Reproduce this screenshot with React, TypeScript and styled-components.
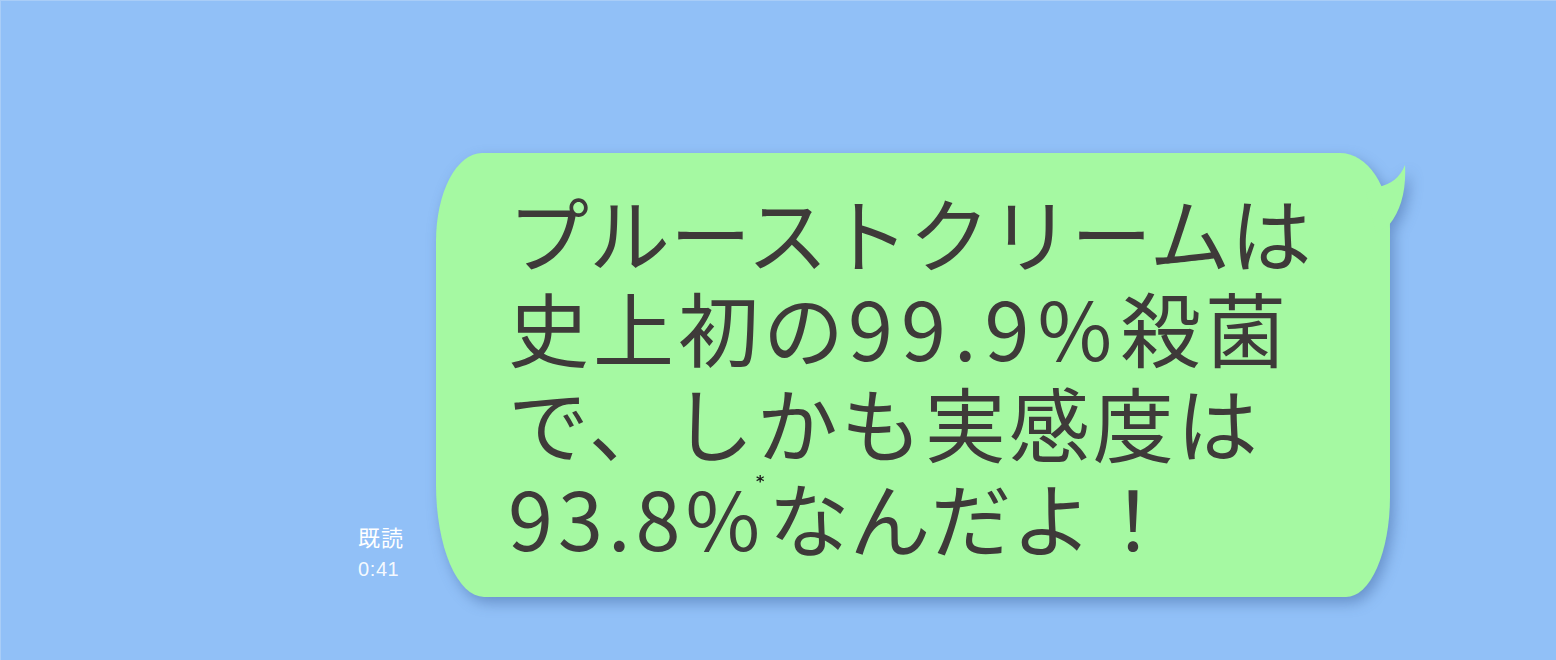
import React from "react";
import styled, { createGlobalStyle } from "styled-components";

const GlobalStyle = createGlobalStyle`
  html, body {
    margin: 0;
    padding: 0;
    background: #91c0f7;
  }
  body {
    font-family: "Noto Sans CJK JP", "Noto Sans", sans-serif;
  }
`;

const Screen = styled.div`
  width: 1556px;
  height: 660px;
  box-sizing: border-box;
  background: #91c0f7;
  border-top: 1px solid #a9cdf7;
  border-left: 1px solid #a9cdf7;
  padding: 152px 0 0 357px;
  display: flex;
  align-items: flex-start;
  overflow: hidden;
`;

const Row = styled.div`
  display: flex;
  align-items: flex-end;
  gap: 32px;
`;

const Meta = styled.div`
  display: flex;
  flex-direction: column;
  color: #ffffff;
  margin-bottom: 16px;
`;

const ReadLabel = styled.span`
  font-family: "Noto Sans CJK JP", sans-serif;
  font-size: 22px;
  line-height: 26px;
  letter-spacing: 1px;
`;

const Time = styled.span`
  font-family: "Liberation Sans", "Noto Sans", sans-serif;
  font-size: 20px;
  line-height: 24px;
  letter-spacing: 0.6px;
  color: rgba(255, 255, 255, 0.92);
  margin-top: 8px;
`;

const BubbleWrap = styled.div`
  position: relative;
  filter: drop-shadow(4px 6px 7px rgba(30, 60, 120, 0.35));
`;

const Bubble = styled.div`
  position: relative;
  width: 954px;
  height: 444px;
  box-sizing: border-box;
  background: #a5f9a2;
  border-radius: 46px 50px 44px 48px / 88px 75px 100px 112px;
  padding: 30px 0 0 72px;
  color: #3e3a39;
  font-family: "Noto Sans CJK JP", sans-serif;
  font-weight: 400;
  font-size: 81px;
  line-height: 95px;
  letter-spacing: 1.5px;
`;

const Line = styled.div<{ $spacing?: number }>`
  white-space: nowrap;
  letter-spacing: ${(p) => (p.$spacing !== undefined ? `${p.$spacing}px` : "inherit")};
`;

const Num = styled.span<{ $spacing: number }>`
  letter-spacing: ${(p) => p.$spacing}px;
`;

const Note = styled.span`
  display: inline-block;
  font-family: "DejaVu Sans", sans-serif;
  font-weight: 700;
  font-size: 16px;
  line-height: 1;
  vertical-align: top;
  margin: 6px 4px 0 -9px;
  color: #1a1a1a;
  letter-spacing: 0;
`;

const Tail = styled.svg`
  position: absolute;
  left: 920px;
  top: 0;
  width: 60px;
  height: 100px;
  overflow: visible;
`;

export default function App() {
  return (
    <>
      <GlobalStyle />
      <Screen>
        <Row>
          <Meta>
            <ReadLabel>既読</ReadLabel>
            <Time>0:41</Time>
          </Meta>
          <BubbleWrap>
            <Bubble>
              <Line $spacing={0}>プルーストクリームは</Line>
              <Line $spacing={4}>
                史上初の<Num $spacing={8}>99.9%</Num>殺菌
              </Line>
              <Line $spacing={3}>で、しかも実感度は</Line>
              <Line $spacing={0}>
                <Num $spacing={5}>93.8%</Num>
                <Note>*</Note>なんだよ！
              </Line>
            </Bubble>
            <Tail viewBox="0 0 60 100">
              <path
                d="M 10 40 L 22 34 Q 42 30 49 12 Q 51 50 33 72 L 20 80 Z"
                fill="#a5f9a2"
              />
            </Tail>
          </BubbleWrap>
        </Row>
      </Screen>
    </>
  );
}
